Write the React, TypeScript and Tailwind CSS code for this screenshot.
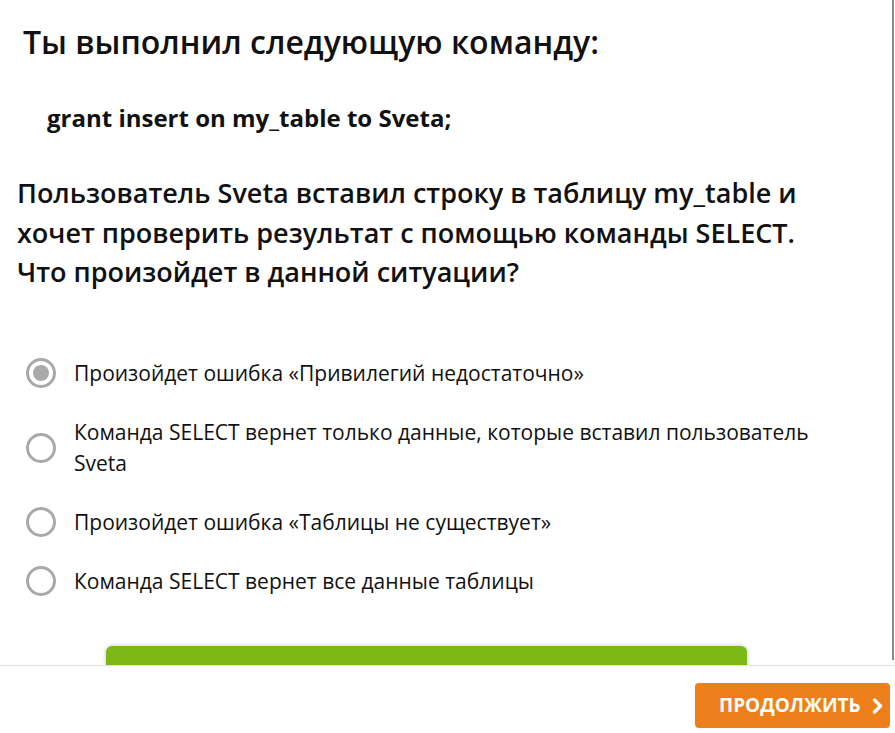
const options = [
  "Произойдет ошибка «Привилегий недостаточно»",
  "Команда SELECT вернет только данные, которые вставил пользователь Sveta",
  "Произойдет ошибка «Таблицы не существует»",
  "Команда SELECT вернет все данные таблицы",
];

function Radio({ checked }: { checked: boolean }) {
  return (
    <span className="flex h-[30px] w-[30px] shrink-0 items-center justify-center rounded-full border-[3px] border-[#a9a9a9] bg-white">
      {checked ? <span className="h-[16px] w-[16px] rounded-full bg-[#a9a9a9]" /> : null}
    </span>
  );
}

export default function App() {
  return (
    <div className="flex h-[733px] w-[895px] flex-col overflow-hidden bg-white font-['Open_Sans',sans-serif] text-[#111]">
      <div className="flex h-[665px] shrink-0">
        <div className="flex-1 overflow-hidden">
          <h1 className="pl-[23px] pt-[19px] text-[32px] font-semibold leading-[46px]">Ты выполнил следующую команду:</h1>
          <p className="mt-[37px] pl-[47px] text-[24px] font-bold leading-[32px]">grant insert on my_table to Sveta;</p>
          <p className="mt-[39px] pl-[17px] text-[27px] font-semibold leading-[39.5px]">
            Пользователь Sveta вставил строку в таблицу my_table и
            <br />
            хочет проверить результат с помощью команды SELECT.
            <br />
            Что произойдет в данной ситуации?
          </p>
          <ul className="mt-[66px] flex flex-col gap-[28px] pl-[26px]">
            {options.map((o, i) => (
              <li key={i} className="flex items-center gap-[18px]">
                <Radio checked={i === 0} />
                <span className="w-[760px] text-[21px] leading-[31px]">{o}</span>
              </li>
            ))}
          </ul>
          <div className="ml-[106px] mt-[49px] h-[40px] w-[641px] rounded-[6px] bg-[#7cb815] shadow-[0_0_4px_rgba(0,0,0,0.25)]" />
        </div>
        <div className="mr-[1px] mb-[5px] w-[2px] bg-[#8a8a8a]" />
      </div>
      <div className="flex flex-1 items-start justify-end border-t border-[#e2e2e2] pr-[5px] pt-[17px]">
        <button type="button" className="flex h-[45px] w-[195px] items-center gap-[11px] rounded-[4px] bg-[#ef7f1a] pl-[24px] text-[19px] font-bold text-white">
          ПРОДОЛЖИТЬ
          <svg width="11" height="16" viewBox="0 0 11 16" fill="none" stroke="currentColor" strokeWidth="3.4" strokeLinecap="round" strokeLinejoin="round">
            <polyline points="2.5,2 8.5,8 2.5,14" />
          </svg>
        </button>
      </div>
    </div>
  );
}
